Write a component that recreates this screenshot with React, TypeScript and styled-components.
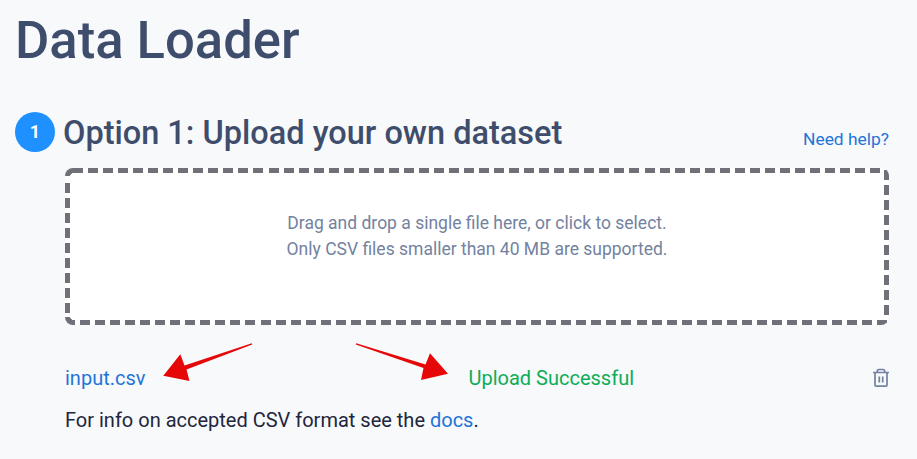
import React from "react";
import styled, { createGlobalStyle } from "styled-components";

const GlobalStyle = createGlobalStyle`
  * { box-sizing: border-box; }
  html, body { margin: 0; background: #f7f9fb; }
  body { font-family: Roboto, "Liberation Sans", sans-serif; overflow: hidden; }
`;

const Page = styled.main`
  position: relative;
  height: 459px;
  padding: 8px 28px 0 15px;
  display: flex;
  flex-direction: column;
`;

const Title = styled.h1`
  margin: 0;
  height: 104px;
  font-size: 52.6px;
  line-height: 64px;
  font-weight: 500;
  color: #3f4d6c;
`;

const StepHeader = styled.header`
  display: flex;
  align-items: flex-start;
  height: 56px;
`;

const StepNumber = styled.span`
  width: 40px;
  height: 40px;
  border-radius: 50%;
  background: #1e90ff;
  color: #fff;
  font-size: 18px;
  font-weight: 700;
  line-height: 40px;
  text-align: center;
`;

const StepTitle = styled.h2`
  margin: 0 0 0 8px;
  flex: 1;
  font-size: 32.5px;
  line-height: 42px;
  font-weight: 500;
  color: #3f4d6c;
`;

const Link = styled.a`
  color: #1f75d8;
  text-decoration: none;
`;

const HelpLink = styled(Link)`
  font-size: 17.4px;
  line-height: 22px;
  margin-top: 16px;
`;

const StepBody = styled.section`
  margin-left: 50px;
`;

/* Dashes are 10px long with 5px gaps, painted along each edge. */
const DropZone = styled.div`
  height: 157px;
  border-radius: 8px;
  background-color: #fff;
  background-image:
    radial-gradient(circle at 100% 100%, transparent 2.5px, #6f7078 3px),
    radial-gradient(circle at 100% 0, transparent 2.5px, #6f7078 3px),
    repeating-linear-gradient(90deg, #6f7078 0 10px, #fff 10px 15.04px),
    repeating-linear-gradient(90deg, #6f7078 0 10px, #fff 10px 15.04px),
    repeating-linear-gradient(180deg, #6f7078 0 10px, #fff 10px 15.04px),
    repeating-linear-gradient(180deg, #6f7078 0 10px, #fff 10px 15.04px);
  background-repeat: no-repeat;
  background-size: 8px 8px, 8px 8px,
    808px 5px, 823px 5px, 5px 135px, 5px 148px;
  background-position: 0 0, 0 100%,
    8px 0, 0 100%, 0 15px, 100% 2px;
  padding-top: 42px;
  text-align: center;
  font-size: 17.5px;
  line-height: 26px;
  color: #73829f;
`;

const FileRow = styled.div`
  display: grid;
  grid-template-columns: 403.5px 1fr auto;
  align-items: center;
  height: 26px;
  margin-top: 40px;
  font-size: 20px;
`;

const Status = styled.span`
  color: #0fac56;
`;

const DeleteButton = styled.button`
  display: flex;
  padding: 0;
  border: 0;
  background: none;
  color: #71819f;
`;

const Note = styled.p`
  margin: 16px 0 0;
  font-size: 20px;
  line-height: 26px;
  color: #22263d;
`;

const Arrows = styled.svg`
  position: absolute;
  left: 0;
  top: 0;
  pointer-events: none;
`;

export default function App() {
  return (
    <Page>
      <GlobalStyle />
      <Title>Data Loader</Title>
      <StepHeader>
        <StepNumber>1</StepNumber>
        <StepTitle>Option 1: Upload your own dataset</StepTitle>
        <HelpLink>Need help?</HelpLink>
      </StepHeader>
      <StepBody>
        <DropZone>
          Drag and drop a single file here, or click to select.
          <br />
          Only CSV files smaller than 40 MB are supported.
        </DropZone>
        <FileRow>
          <Link>input.csv</Link>
          <Status>Upload Successful</Status>
          <DeleteButton aria-label="Delete file">
            <svg width="16" height="20" viewBox="0 0 16 20" fill="none" stroke="currentColor" strokeWidth="1.7">
              <path d="M0 4.5h16M4.3 4.5V3.2q0-1.7 1.7-1.7h4q1.7 0 1.7 1.7V4.5M2 4.5V17q0 1.2 1.2 1.2h9.6q1.2 0 1.2-1.2V4.5M6.3 8.5v6M9.7 8.5v6" />
            </svg>
          </DeleteButton>
        </FileRow>
        <Note>
          For info on accepted CSV format see the <Link>docs</Link>.
        </Note>
      </StepBody>
      <Arrows width="917" height="459" viewBox="0 0 917 459" fill="#e60808">
        <path d="M163.3 375.7L180.3 354.3L184.5 365.5L251.8 343.2L252.2 344.5L186.5 369.5L189.5 381Z" />
        <path d="M448 373.7L430 353.3L425.5 364.5L356.2 343.2L355.8 344.5L423.5 368L421 380Z" />
      </Arrows>
    </Page>
  );
}
